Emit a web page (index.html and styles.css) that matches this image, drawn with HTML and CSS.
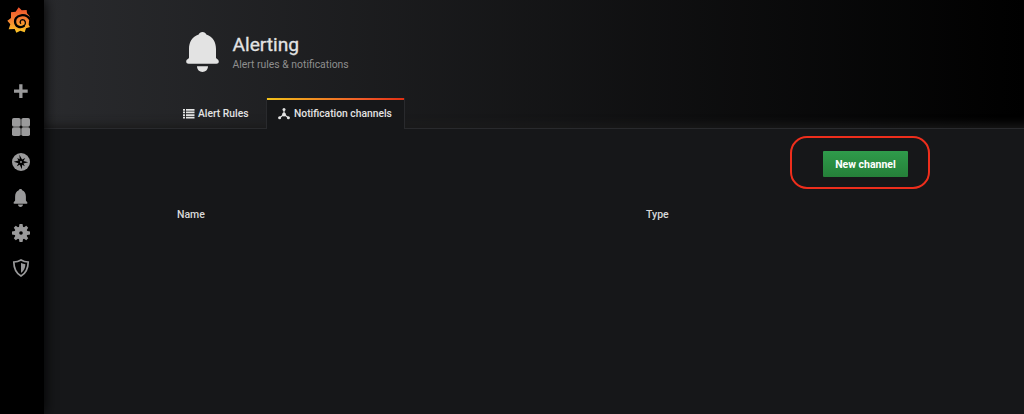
FILE: index.html
```html
<!doctype html>
<html lang="en">
<head>
    <meta charset="utf-8">
    <meta name="viewport" content="width=device-width, initial-scale=1">
    <title>Alerting</title>
    <link rel="stylesheet" href="styles.css">
</head>
<body>

    <nav class="sidemenu">
        <a class="logo">
            <svg width="24" height="26" viewBox="20 20 72 78">
                <defs>
                    <linearGradient id="logoFill" x1="0" y1="0" x2="0" y2="1">
                        <stop offset="0" stop-color="#f0502a"/>
                        <stop offset="0.5" stop-color="#f58233"/>
                        <stop offset="1" stop-color="#fcc624"/>
                    </linearGradient>
                </defs>
                <path fill="url(#logoFill)" d="M55 21L64 30L79 29L80 39Q88 45 90 56L86 63L85 73L89 80L77 84L73 96L60 91L48 97L43 86L25 87L30 72L21 61L32 53L32 36L46 34Z"/>
                <path fill="none" stroke="#000" stroke-width="7" d="M92 62C86 50 74 43 62 45C48 47 42 58 45 69C49 81 63 84 72 76"/>
                <path fill="none" stroke="#000" stroke-width="4" d="M71 77C79 69 75 59 67 58C60 58 57 66 62 70"/>
            </svg>
        </a>
        <div class="sidemenu-items">
            <a class="sidemenu-item">
                <svg width="18" height="18" viewBox="0 0 18 18"><path d="M7.200 1.200h3.300v5.200h5.200v3.300h-5.200v5.200H7.200V9.700H2V6.400h5.200z"/></svg>
            </a>
            <a class="sidemenu-item">
                <svg width="18" height="18" viewBox="0 0 18 18"><rect width="8.700" height="8.700" rx="1.800"/><rect x="9.300" width="8.700" height="8.700" rx="1.800"/><rect y="9.300" width="8.700" height="8.700" rx="1.800"/><rect x="9.300" y="9.300" width="8.700" height="8.700" rx="1.800"/></svg>
            </a>
            <a class="sidemenu-item">
                <svg width="18" height="18" viewBox="0 0 18 18">
                    <circle cx="9" cy="9" r="9"/>
                    <path fill="#000" d="M7.400 1.800L10.100 6.600L13.200 5L11.500 7.900L16.200 9.300L11.500 10.500L12.800 13.200L10.200 11.700L9.800 16.200L7.800 11.700L4.800 13.200L6.400 10.300L1.800 8.700L6.400 7.500L5.200 5L7.700 6.200Z"/>
                    <circle cx="9" cy="9" r="0.900"/>
                </svg>
            </a>
            <a class="sidemenu-item">
                <svg width="15" height="18" viewBox="0 0 33 40"><path d="M16.500 0c2 0 3.200 1.200 3.800 3C26 5.500 28.500 11 28.500 17v8c0 2 3.500 3.500 3.500 6 0 1-.8 1.500-2 1.500H3c-1.200 0-2-.5-2-1.500 0-2.500 3.500-4 3.500-6v-8C4.500 11 7 5.500 12.700 3 13.500 1.200 14.500 0 16.500 0zM11 34.500h11c0 3.500-2.500 5.500-5.500 5.500S11 38 11 34.500z"/></svg>
            </a>
            <a class="sidemenu-item">
                <svg width="18" height="18" viewBox="-9 -9 18 18">
                    <path d="M-2.200-5L-1.500-9H1.500L2.200-5V5L1.500 9H-1.500L-2.200 5z"/>
                    <path transform="rotate(45)" d="M-2.200-5L-1.400-8.800H1.400L2.200-5V5L1.400 8.800H-1.400L-2.200 5z"/>
                    <path transform="rotate(90)" d="M-2.200-5L-1.500-9H1.500L2.200-5V5L1.500 9H-1.500L-2.200 5z"/>
                    <path transform="rotate(135)" d="M-2.200-5L-1.400-8.800H1.400L2.200-5V5L1.400 8.800H-1.400L-2.200 5z"/>
                    <circle r="6.500"/>
                    <circle r="1.800" fill="#000"/>
                </svg>
            </a>
            <a class="sidemenu-item">
                <svg width="18" height="18" viewBox="0 0 18 18"><path fill="none" stroke="#9a9a9b" stroke-width="1.700" d="M9 1C6.500 2.500 4 3 1.800 3C1.900 9 3.500 14 9 17C14.500 14 16.100 9 16.200 3C14 3 11.500 2.500 9 1Z"/><path d="M9 4c1.500.7 3 1 4.400 1.200C13.200 9 12 12 9 14z"/></svg>
            </a>
        </div>
    </nav>

    <main class="main-view">
        <header class="page-header">
            <div class="page-title">
                <svg class="page-icon" width="33" height="40" viewBox="0 0 33 40"><path d="M16.500 0c2 0 3.200 1 3.800 2.500C27 4.500 30 10.500 30 17v8.500c0 1.500 2.800 1.500 2.800 4 0 1.500-1 2.200-2.300 2.200h-28C1.200 31.700.2 31 .2 29.500.2 27 3 27 3 25.500V17C3 10.500 6 4.500 12.700 2.500 13.300 1 14.500 0 16.500 0zM11 34.300h11c0 3.500-2.500 5.700-5.500 5.700S11 37.800 11 34.300z"/></svg>
                <div>
                    <h1>Alerting</h1>
                    <div class="sub-title">Alert rules &amp; notifications</div>
                </div>
            </div>
            <div class="tabs">
                <a class="tab">
                    <svg width="12" height="10" viewBox="0 0 12 10"><path d="M0 0h2v1.700H0zM3 0h8.500v1.700H3zM0 2.600h2v1.700H0zM3 2.600h8.500v1.700H3zM0 5.200h2v1.700H0zM3 5.200h8.500v1.700H3zM0 7.800h2v1.700H0zM3 7.800h8.500v1.700H3z"/></svg>
                    <span>Alert Rules</span>
                </a>
                <a class="tab active">
                    <svg width="12" height="12" viewBox="0 0 12 12"><path fill="none" stroke="#e3e3e3" stroke-width="1.100" d="M6 1.500v4.500M1.500 9.700L6 6.500l4.500 3.200"/><circle cx="6" cy="1.500" r="1.500"/><circle cx="6" cy="6.500" r="1.900"/><circle cx="1.600" cy="9.800" r="1.500"/><circle cx="10.400" cy="9.800" r="1.500"/></svg>
                    <span>Notification channels</span>
                </a>
            </div>
        </header>

        <section class="page-body">
            <div class="action-bar">
                <div class="highlight">
                    <button type="button" class="btn">New channel</button>
                </div>
            </div>
            <div class="table-head">
                <div>Name</div>
                <div>Type</div>
            </div>
        </section>
    </main>

</body>
</html>
```

FILE: styles.css
```css
body {
    font-family: Roboto, "Liberation Sans", sans-serif;
    font-size: 10.5px;
    background: #161719;
    color: #d8d9da;
    margin: 0;
    display: flex;
    height: 100vh;
    overflow: hidden;
}

svg {
    display: block;
    flex: none;
}

.sidemenu {
    position: relative;
    z-index: 1;
    flex: none;
    width: 44px;
    background: #000;
    box-shadow: 0 0 14px #000;
}

.logo {
    display: block;
    padding: 7px 0 0 7px;
}

.sidemenu-items {
    padding: 41px 0 0 3px;
    width: 35px;
}

.sidemenu-item {
    display: flex;
    align-items: center;
    justify-content: center;
    height: 35.3px;
}

.sidemenu-item svg {
    fill: #9a9a9b;
}

.main-view {
    flex: 1;
}

/* header */
.page-header {
    display: flex;
    flex-direction: column;
    justify-content: space-between;
    box-sizing: border-box;
    height: 129px;
    padding: 32px 0 0 125px;
    background: linear-gradient(90deg, #292a2d, #000);
    box-shadow: inset 0 -10px 10px -7px #1b1b1b;
    border-bottom: 1px solid #292a2d;
}

.page-title {
    display: flex;
    gap: 14px;
    padding-left: 16.5px;
}

.page-icon {
    fill: #e3e3e3;
}

h1 {
    margin: 1px 0 0;
    font-size: 19.2px;
    font-weight: 400;
    line-height: 24px;
    color: #e3e3e3;
    -webkit-text-stroke: 0.3px #e3e3e3;
}

.sub-title {
    font-size: 10.4px;
    line-height: 15px;
    color: #8e8e8e;
}

.tabs {
    display: flex;
    margin-bottom: -1px;
}

.tab {
    display: flex;
    align-items: center;
    gap: 3px;
    box-sizing: border-box;
    height: 31px;
    width: 97px;
    padding-left: 14px;
    color: #e3e3e3;
    fill: #e3e3e3;
    font-size: 10.3px;
    font-weight: 500;
    white-space: nowrap;
}

.tab.active {
    gap: 4px;
    width: 139px;
    padding: 0 0 0 11px;
    background: linear-gradient(90deg, #f2c21a, #f05a28 70%, #e02f12) top / 100% 2px no-repeat #161719;
    border: 1px solid #292a2d;
    border-width: 0 1px;
}

/* content */
.page-body {
    padding: 7px 95px 0 133px;
}

.action-bar {
    display: flex;
    justify-content: flex-end;
}

.highlight {
    display: flex;
    justify-content: flex-end;
    box-sizing: border-box;
    width: 140px;
    height: 53px;
    margin-right: -1px;
    padding: 13px 20px 0 0;
    border: 2px solid #ee2e1c;
    border-radius: 17px;
}

.btn {
    width: 85px;
    height: 26px;
    padding: 0;
    border: none;
    border-radius: 1px;
    background: linear-gradient(#2f9b4b, #258039);
    color: #fff;
    font-family: inherit;
    font-size: 10.5px;
    font-weight: 700;
}

.table-head {
    display: grid;
    grid-template-columns: 469px 1fr;
    padding-top: 19px;
    line-height: 14px;
    font-weight: 500;
}
```
